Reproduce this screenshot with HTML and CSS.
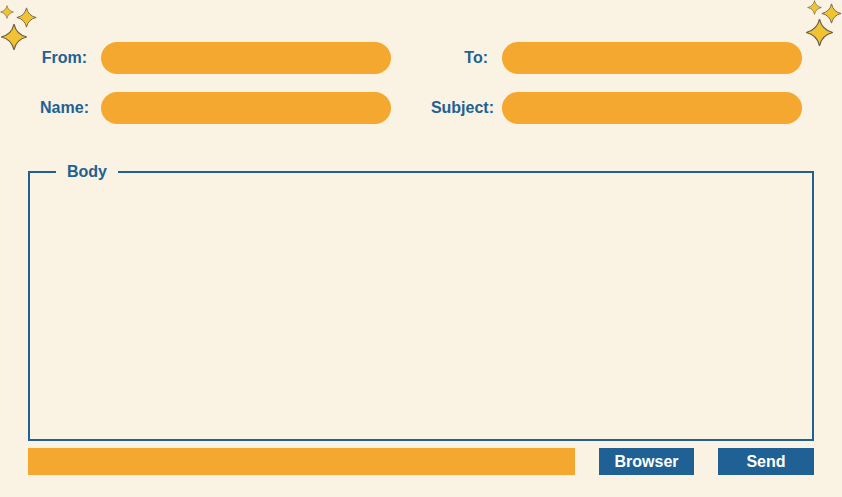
FILE: index.html
```html
<!DOCTYPE html>
<html>
<head>
<meta charset="utf-8">
<link rel="stylesheet" href="styles.css">
</head>
<body>
<div class="page">
  <svg class="spark s1" viewBox="-12 -12 24 24"><path d="M0 -11 Q2 -2 11 0 Q2 2 0 11 Q-2 2 -11 0 Q-2 -2 0 -11Z"/></svg>
  <svg class="spark s2" viewBox="-12 -12 24 24"><path d="M0 -11 Q2 -2 11 0 Q2 2 0 11 Q-2 2 -11 0 Q-2 -2 0 -11Z"/></svg>
  <svg class="spark s3" viewBox="-12 -12 24 24"><path d="M0 -11 Q2 -2 11 0 Q2 2 0 11 Q-2 2 -11 0 Q-2 -2 0 -11Z"/></svg>
  <svg class="spark s4" viewBox="-12 -12 24 24"><path d="M0 -11 Q2 -2 11 0 Q2 2 0 11 Q-2 2 -11 0 Q-2 -2 0 -11Z"/></svg>
  <svg class="spark s5" viewBox="-12 -12 24 24"><path d="M0 -11 Q2 -2 11 0 Q2 2 0 11 Q-2 2 -11 0 Q-2 -2 0 -11Z"/></svg>
  <svg class="spark s6" viewBox="-12 -12 24 24"><path d="M0 -11 Q2 -2 11 0 Q2 2 0 11 Q-2 2 -11 0 Q-2 -2 0 -11Z"/></svg>

  <div class="fields">
    <label class="lbl lbl-left">From:</label>
    <div class="pill"></div>
    <label class="lbl lbl-right lbl-to">To:</label>
    <div class="pill"></div>
    <label class="lbl lbl-left">Name:</label>
    <div class="pill"></div>
    <label class="lbl lbl-right">Subject:</label>
    <div class="pill"></div>
  </div>

  <fieldset class="body-box">
    <legend class="body-legend">Body</legend>
    <div class="body-area"></div>
  </fieldset>

  <div class="actions">
    <div class="file-bar"></div>
    <button class="btn btn-browse">Browser</button>
    <button class="btn btn-send">Send</button>
  </div>
</div>
</body>
</html>
```

FILE: styles.css
```css
html, body {
  margin: 0;
  padding: 0;
  background: #faf3e4;
}
.page {
  position: relative;
  width: 842px;
  height: 497px;
  box-sizing: border-box;
  padding: 42px 28px 0 28px;
  font-family: "Liberation Sans", Arial, sans-serif;
  color: #1f6194;
}
.spark {
  position: absolute;
  fill: #f1c232;
  stroke: #6d5f45;
  stroke-width: 1;
}
.s1 { left: 0; top: 5px; width: 14px; height: 14px; }
.s2 { left: 16px; top: 7px; width: 21px; height: 21px; }
.s3 { left: 0; top: 23px; width: 28px; height: 28px; }
.s4 { left: 807px; top: 0; width: 15px; height: 15px; }
.s5 { left: 821px; top: 3px; width: 21px; height: 21px; }
.s6 { left: 805px; top: 18px; width: 29px; height: 29px; }

.fields {
  display: grid;
  grid-template-columns: 73px 290px 111px 300px;
  grid-auto-rows: 32px;
  row-gap: 18px;
}
.lbl {
  font-weight: bold;
  font-size: 16px;
  display: flex;
  align-items: center;
}
.lbl-left {
  justify-content: center;
}
.lbl-right {
  justify-content: flex-end;
  padding-right: 8px;
}
.lbl-to {
  padding-right: 14px;
}
.pill {
  background: #f4a82f;
  border-radius: 16px;
}

.body-box {
  margin: 38px 0 0 0;
  padding: 0;
  border: 2px solid #1f6194;
  min-width: 0;
}
.body-legend {
  margin-left: 26px;
  padding: 0 11px;
  font-weight: bold;
  font-size: 16px;
  line-height: 20px;
}
.body-area {
  height: 257px;
}

.actions {
  display: flex;
  margin-top: 7px;
  height: 27px;
}
.file-bar {
  width: 547px;
  background: #f4a82f;
}
.btn {
  border: none;
  margin: 0;
  padding: 0;
  background: #1f6194;
  color: #ffffff;
  font-family: "Liberation Sans", Arial, sans-serif;
  font-weight: bold;
  font-size: 16px;
}
.btn-browse {
  width: 95px;
  margin-left: 24px;
}
.btn-send {
  width: 96px;
  margin-left: 24px;
}
```
